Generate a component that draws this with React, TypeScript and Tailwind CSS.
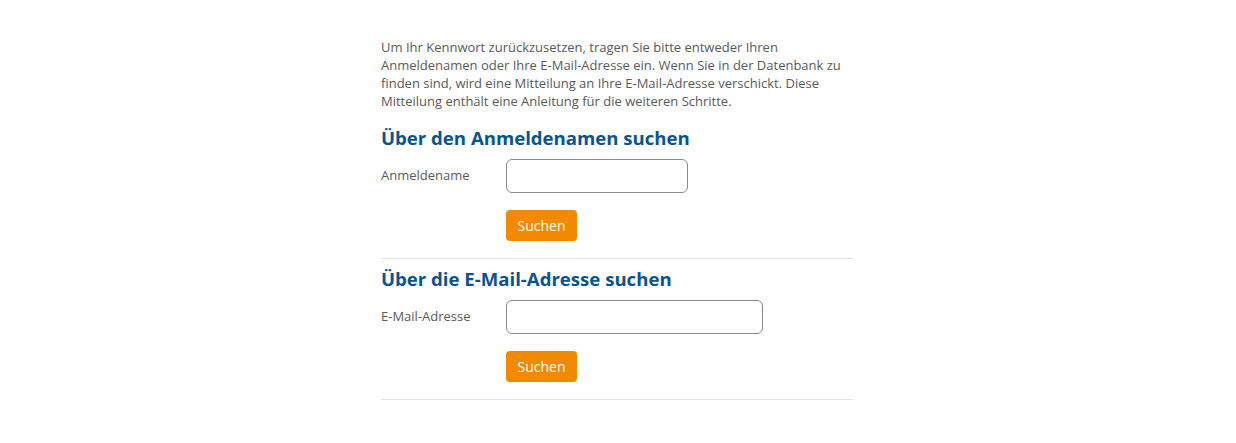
import React from "react";

function Section({ title, label, inputW }: { title: string; label: string; inputW: string }) {
  return (
    <div>
      <h2 className="text-[18.6px] leading-[26px] font-bold text-[#0a5391]">{title}</h2>
      <div className="mt-2 flex items-center">
        <label className="w-[125px] text-[13px] text-[#5a5a5a]">{label}</label>
        <input
          className={`${inputW} h-[34px] rounded-[6px] border border-[#8a8a8a] bg-white outline-none`}
        />
      </div>
      <div className="mt-[17px] pl-[125px]">
        <button className="h-[31px] w-[71px] rounded-[4px] bg-[#f28a00] text-[14px] text-white">
          Suchen
        </button>
      </div>
      <div className="mt-[17px] h-px bg-[#e3e3e3]" />
    </div>
  );
}

export default function App() {
  return (
    <div
      className="min-h-[443px] bg-white pt-[38px]"
      style={{ fontFamily: '"Open Sans", sans-serif' }}
    >
      <div className="mx-auto w-[474px] pr-[2px]">
        <p className="text-[13px] leading-[18px] text-[#5a5a5a]">
          Um Ihr Kennwort zurückzusetzen, tragen Sie bitte entweder Ihren Anmeldenamen oder Ihre
          E-Mail-Adresse ein. Wenn Sie in der Datenbank zu finden sind, wird eine Mitteilung an
          Ihre E-Mail-Adresse verschickt. Diese Mitteilung enthält eine Anleitung für die weiteren
          Schritte.
        </p>
        <div className="mt-[15px]">
          <Section title="Über den Anmeldenamen suchen" label="Anmeldename" inputW="w-[182px]" />
        </div>
        <div className="mt-[7px]">
          <Section title="Über die E-Mail-Adresse suchen" label="E-Mail-Adresse" inputW="w-[257px]" />
        </div>
      </div>
    </div>
  );
}
